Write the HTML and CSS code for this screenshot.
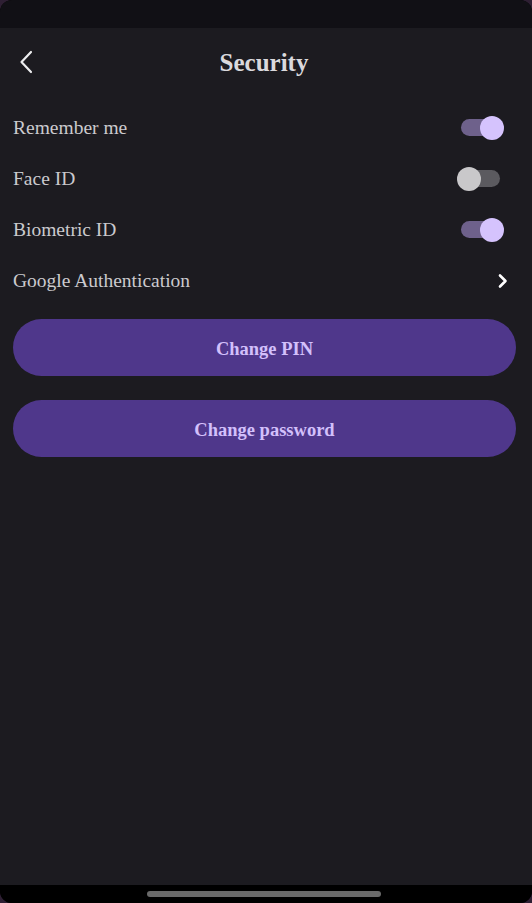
FILE: index.html
```html
<!DOCTYPE html>
<html>
<head>
<meta charset="utf-8">
<link rel="stylesheet" href="styles.css">
</head>
<body>
<div class="app">
  <div class="status"></div>
  <main class="screen">
    <header class="header">
      <button class="back" aria-label="Back">
        <svg width="14" height="24" viewBox="0 0 14 24"><path d="M12 2 L2.5 12 L12 22" fill="none" stroke="#ececee" stroke-width="2.2" stroke-linecap="round" stroke-linejoin="round"/></svg>
      </button>
      <h1 class="title">Security</h1>
    </header>
    <section class="rows">
      <div class="row">
        <span class="label">Remember me</span>
        <span class="toggle on"><span class="track"></span><span class="thumb"></span></span>
      </div>
      <div class="row">
        <span class="label">Face ID</span>
        <span class="toggle"><span class="track"></span><span class="thumb"></span></span>
      </div>
      <div class="row">
        <span class="label">Biometric ID</span>
        <span class="toggle on"><span class="track"></span><span class="thumb"></span></span>
      </div>
      <div class="row">
        <span class="label">Google Authentication</span>
        <svg class="chev" width="12" height="16" viewBox="0 0 12 16"><path d="M3 2.5 L8.5 8 L3 13.5" fill="none" stroke="#ffffff" stroke-width="2.6" stroke-linecap="round" stroke-linejoin="round"/></svg>
      </div>
    </section>
    <section class="actions">
      <button class="btn">Change PIN</button>
      <button class="btn">Change password</button>
    </section>
  </main>
  <div class="navbar"><span class="home"></span></div>
</div>
</body>
</html>
```

FILE: styles.css
```css
* { box-sizing: border-box; }
html, body {
  margin: 0;
  padding: 0;
  background: #2e1f33;
  width: 532px;
  height: 903px;
  overflow: hidden;
}
.app {
  width: 532px;
  height: 903px;
  display: flex;
  flex-direction: column;
  border-radius: 12px;
  overflow: hidden;
  background: #000;
  font-family: "Liberation Serif", "DejaVu Serif", serif;
}
.status {
  height: 28px;
  background: #111015;
  flex: none;
}
.screen {
  flex: 1;
  background: #1c1b20;
  display: flex;
  flex-direction: column;
}
.header {
  height: 68px;
  display: flex;
  align-items: center;
  justify-content: center;
  position: relative;
}
.back {
  position: absolute;
  left: 19px;
  top: 22px;
  background: none;
  border: 0;
  padding: 0;
  width: 14px;
  height: 24px;
  display: flex;
}
.title {
  margin: 0;
  font-size: 25px;
  font-weight: 700;
  color: #dad9dd;
  letter-spacing: 0;
  padding-top: 1px;
  padding-right: 4px;
}
.rows {
  padding-top: 6px;
  display: flex;
  flex-direction: column;
}
.row {
  height: 51px;
  display: flex;
  align-items: center;
  justify-content: space-between;
  padding: 0 25px 0 13px;
}
.label {
  font-size: 19.5px;
  color: #cbcace;
}
.toggle {
  position: relative;
  width: 48px;
  height: 24px;
  margin-right: 3px;
  flex: none;
}
.track {
  position: absolute;
  left: 5px;
  top: 3.5px;
  width: 39px;
  height: 17px;
  border-radius: 9px;
  background: #5b5a5f;
}
.thumb {
  position: absolute;
  top: 0;
  left: 1px;
  width: 24px;
  height: 24px;
  border-radius: 50%;
  background: #c9c8ca;
}
.toggle.on .track { background: #6e618b; }
.toggle.on .thumb { left: 24px; background: #d5c3fd; }
.chev {
  margin-right: -2px;
  flex: none;
}
.actions {
  margin-top: 13px;
  padding: 0 16px 0 13px;
  display: flex;
  flex-direction: column;
  gap: 24px;
}
.btn {
  height: 57px;
  border: 0;
  border-radius: 29px;
  background: #4f378b;
  color: #d3c0fb;
  font-family: "Liberation Serif", "DejaVu Serif", serif;
  font-size: 18.5px;
  font-weight: 700;
  padding: 4px 0 0;
}
.navbar {
  height: 18px;
  flex: none;
  background: #000;
  display: flex;
  justify-content: center;
  padding-top: 6px;
}
.home {
  width: 234px;
  height: 6px;
  border-radius: 3px;
  background: #6a6a6a;
  margin-left: -5px;
}
```
